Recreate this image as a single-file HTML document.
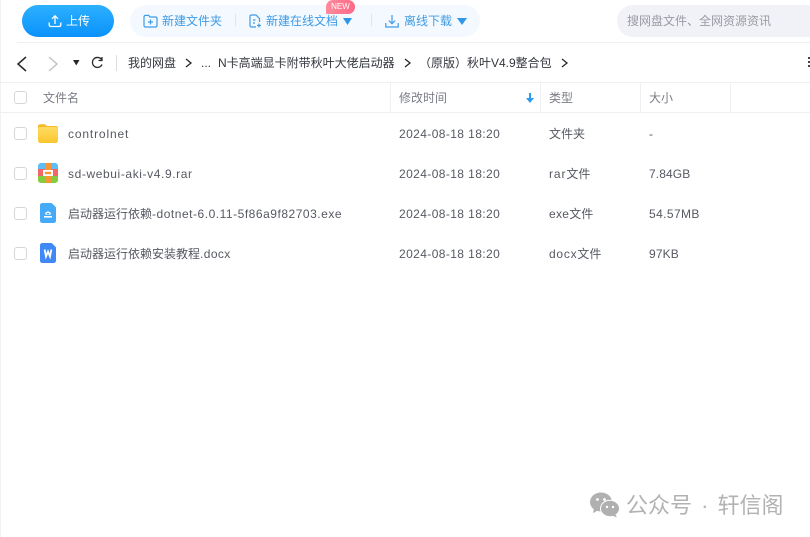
<!DOCTYPE html>
<html><head><meta charset="utf-8">
<style>
html,body{margin:0;padding:0;background:#fff}
body{width:810px;height:537px;position:relative;overflow:hidden;font-family:"Liberation Sans","Noto Sans CJK SC",sans-serif;font-size:12px;color:#565962}
.t{position:absolute;white-space:nowrap;line-height:16px}
.a{position:absolute}
svg{position:absolute;overflow:visible}
.cb{position:absolute;left:14px;width:11px;height:11px;border:1px solid #d6d7da;border-radius:3px;background:#fff}
.ln{position:absolute;background:#f0f0f2}
.b{color:#3f9be6}
.c{color:#33363d}
.s{letter-spacing:.52px}
</style></head><body>
<div class="a" style="left:0;top:0;width:1px;height:537px;background:#f1f2f4"></div>
<div class="a" style="left:22px;top:5px;width:92px;height:32px;border-radius:16px;background:linear-gradient(180deg,#2cb0ff,#0a92fb)"></div>
<svg style="left:48px;top:14px" width="14" height="14" viewBox="0 0 14 14" fill="none" stroke="#fff" stroke-width="1.3"><path d="M7 10V2M4 4.800L7 1.800l3 3M1.200 8.500v2.300c0 1 .7 1.700 1.700 1.700h8.200c1 0 1.700-.7 1.700-1.700V8.500"/></svg>
<div class="t" style="left:66px;top:13px;color:#fff;font-size:12px">上传</div>

<div class="a" style="left:130px;top:5px;width:350px;height:32px;border-radius:16px;background:#f3f9fe"></div>
<svg style="left:143px;top:14px" width="15" height="14" viewBox="0 0 15 14" fill="none" stroke="#3f9be6" stroke-width="1.2"><path d="M1 3c0-1 .6-1.600 1.600-1.600h3L7 3h5.400c1 0 1.600.6 1.600 1.600v6.800c0 1-.6 1.600-1.600 1.600H2.600C1.600 13 1 12.400 1 11.400zM7.500 5.500v5M5 8h5"/></svg>
<div class="t b" style="left:162px;top:13px">新建文件夹</div>
<div class="a" style="left:235px;top:14px;width:1px;height:12px;background:#d6e8f6"></div>
<svg style="left:249px;top:14px" width="14" height="14" viewBox="0 0 14 14" fill="none" stroke="#3f9be6" stroke-width="1.2"><path d="M7 13H2.500C1.600 13 1 12.400 1 11.500V2.500C1 1.600 1.600 1 2.500 1H7l3.500 3.500V8M4 6h2.500M4 9h2M10 9.500v4M8 11.500h4"/></svg>
<div class="t b" style="left:266px;top:13px">新建在线文档</div>
<svg style="left:343px;top:18px" width="9" height="7" viewBox="0 0 9 7"><path d="M0 0h9L4.500 7z" fill="#2f96e8"/></svg>
<div class="a" style="left:326px;top:0;width:29px;height:14px;border-radius:8px 8px 8px 1px;background:linear-gradient(90deg,#ff8b9c,#ff6a86)"></div>
<div class="t" style="left:326px;top:0;width:29px;text-align:center;font-size:8px;line-height:14px;color:#fff">NEW</div>
<div class="a" style="left:371px;top:14px;width:1px;height:12px;background:#d6e8f6"></div>
<svg style="left:385px;top:14px" width="14" height="14" viewBox="0 0 14 14" fill="none" stroke="#3f9be6" stroke-width="1.2"><path d="M7 1v8.500M3.800 6.500L7 9.700l3.200-3.200M.8 9v4h12.400V9"/></svg>
<div class="t b" style="left:404px;top:13px">离线下载</div>
<svg style="left:457px;top:18px" width="10" height="7" viewBox="0 0 10 7"><path d="M0 0h10L5 7z" fill="#2f96e8"/></svg>

<div class="a" style="left:617px;top:5px;width:193px;height:32px;border-radius:16px 0 0 16px;background:#f1f2f7"></div>
<div class="t" style="left:627px;top:13px;color:#9a9ca3">搜网盘文件、全网资源资讯</div>

<div class="ln" style="left:17px;top:42px;width:793px;height:1px"></div>

<svg style="left:15px;top:56px" width="13" height="16" viewBox="0 0 13 16" fill="none" stroke="#26282e" stroke-width="1.5"><path d="M11 1L3 8l8 7"/></svg>
<svg style="left:47px;top:56px" width="13" height="16" viewBox="0 0 13 16" fill="none" stroke="#bdbec2" stroke-width="1.3"><path d="M2 1l8 7-8 7"/></svg>
<svg style="left:73px;top:60px" width="7" height="6" viewBox="0 0 7 6"><path d="M0 0h6.500L3.250 5.500z" fill="#26282e"/></svg>
<svg style="left:90px;top:56px" width="14" height="14" viewBox="0 0 14 14" fill="none" stroke="#26282e" stroke-width="1.3"><path d="M11.500 3.500A5 5 0 1 0 12 8.500M12 1v3.500H8.500"/></svg>
<div class="a" style="left:116px;top:55px;width:1px;height:16px;background:#dcdde0"></div>
<div class="t c" style="left:128px;top:55px">我的网盘</div>
<svg style="left:185px;top:58px" width="7" height="10" viewBox="0 0 7 10" fill="none" stroke="#26282e" stroke-width="1.3"><path d="M1 1l5 4-5 4"/></svg>
<div class="t c" style="left:201px;top:55px">...</div>
<div class="t c" style="left:218px;top:55px">N卡高端显卡附带秋叶大佬启动器</div>
<svg style="left:404px;top:58px" width="7" height="10" viewBox="0 0 7 10" fill="none" stroke="#26282e" stroke-width="1.3"><path d="M1 1l5 4-5 4"/></svg>
<div class="t c" style="left:419px;top:55px">（原版）秋叶V4.9整合包</div>
<svg style="left:561px;top:58px" width="7" height="10" viewBox="0 0 7 10" fill="none" stroke="#26282e" stroke-width="1.3"><path d="M1 1l5 4-5 4"/></svg>
<div class="a" style="left:808px;top:57px;width:2px;height:2px;background:#444"></div>
<div class="a" style="left:808px;top:61px;width:2px;height:2px;background:#444"></div>
<div class="a" style="left:808px;top:65px;width:2px;height:2px;background:#444"></div>

<div class="ln" style="left:0;top:82px;width:810px;height:1px"></div>
<div class="ln" style="left:0;top:112px;width:810px;height:1px"></div>
<div class="ln" style="left:390px;top:83px;width:1px;height:29px"></div>
<div class="ln" style="left:540px;top:83px;width:1px;height:29px"></div>
<div class="ln" style="left:640px;top:83px;width:1px;height:29px"></div>
<div class="ln" style="left:730px;top:83px;width:1px;height:29px"></div>

<div class="cb" style="top:91px"></div>
<div class="t" style="left:43px;top:90px;color:#7b7d85">文件名</div>
<div class="t" style="left:399px;top:90px;color:#7b7d85">修改时间</div>
<svg style="left:526px;top:93px" width="8" height="10" viewBox="0 0 8 10"><path d="M3 0h2v5h3L4 10 0 5h3z" fill="#2b9df0"/></svg>
<div class="t" style="left:549px;top:90px;color:#7b7d85">类型</div>
<div class="t" style="left:649px;top:90px;color:#7b7d85">大小</div>

<!-- row 1 -->
<div class="cb" style="top:127px"></div>
<svg style="left:38px;top:124px" width="20" height="19" viewBox="0 0 20 19"><path d="M0 2.500C0 1 .8.200 2.200.200h4.600L9 2h8.800C19.200 2 20 2.800 20 4.200V6H0z" fill="#f7b82c"/><rect y="3" width="20" height="16" rx="2.200" fill="url(#fg)"/><defs><linearGradient id="fg" x1="0" y1="0" x2="0" y2="1"><stop offset="0" stop-color="#ffdc62"/><stop offset="1" stop-color="#fcc62f"/></linearGradient></defs></svg>
<div class="t" style="left:68px;top:126px;letter-spacing:.85px">controlnet</div>
<div class="t" style="left:399px;top:126px;letter-spacing:.4px">2024-08-18 18:20</div>
<div class="t" style="left:549px;top:126px">文件夹</div>
<div class="t" style="left:649px;top:126px">-</div>

<!-- row 2 -->
<div class="cb" style="top:167px"></div>
<svg style="left:38px;top:163px" width="20" height="20" viewBox="0 0 20 20"><defs><clipPath id="rc"><rect width="20" height="20" rx="3"/></clipPath></defs><g clip-path="url(#rc)"><rect width="20" height="7" fill="#5dbdf5"/><rect y="6" width="20" height="8" fill="#f2686a"/><rect y="13" width="20" height="7" fill="#84cc3e"/><rect x="7" width="6" height="20" fill="#f79733"/><rect x="5" y="7" width="10" height="6" fill="#fff"/><rect x="6.800" y="8.800" width="6.400" height="2.400" fill="#f79733"/></g></svg>
<div class="t" style="left:68px;top:166px;letter-spacing:.6px">sd-webui-aki-v4.9.rar</div>
<div class="t" style="left:399px;top:166px;letter-spacing:.4px">2024-08-18 18:20</div>
<div class="t" style="left:549px;top:166px"><span style="letter-spacing:.9px">rar</span>文件</div>
<div class="t" style="left:649px;top:166px;letter-spacing:.1px">7.84GB</div>

<!-- row 3 -->
<div class="cb" style="top:207px"></div>
<svg style="left:40px;top:203px" width="16" height="20" viewBox="0 0 16 20"><path d="M2.500 0h8.500c.5 0 .9.200 1.200.5l3.300 3.300c.3.300.5.700.5 1.200v12.500c0 1.500-1 2.500-2.500 2.500h-11C1 20 0 19 0 17.500v-15C0 1 1 0 2.500 0z" fill="#45aaf8"/><path d="M5 11.500C5 7.500 11 7.500 11 11.500z" fill="#fff"/><path d="M6.500 11h3C9.300 9.500 6.700 9.500 6.500 11z" fill="#45aaf8"/><rect x="4" y="13" width="8" height="1.600" fill="#fff"/></svg>
<div class="t" style="left:68px;top:206px">启动器运行依赖<span class="s">-dotnet-6.0.11-5f86a9f82703.exe</span></div>
<div class="t" style="left:399px;top:206px;letter-spacing:.4px">2024-08-18 18:20</div>
<div class="t" style="left:549px;top:206px"><span style="letter-spacing:.3px">exe</span>文件</div>
<div class="t" style="left:649px;top:206px;letter-spacing:.4px">54.57MB</div>

<!-- row 4 -->
<div class="cb" style="top:247px"></div>
<svg style="left:40px;top:243px" width="16" height="20" viewBox="0 0 16 20"><path d="M2.500 0h8.500c.5 0 .9.200 1.200.5l3.300 3.300c.3.300.5.700.5 1.200v12.500c0 1.500-1 2.500-2.500 2.500h-11C1 20 0 19 0 17.500v-15C0 1 1 0 2.500 0z" fill="#3f88f5"/><path d="M4.600 6.500L6 13.500 8 8.500l2 5 1.400-7" fill="none" stroke="#fff" stroke-width="1.800"/></svg>
<div class="t" style="left:68px;top:246px">启动器运行依赖安装教程<span style="letter-spacing:.4px">.docx</span></div>
<div class="t" style="left:399px;top:246px;letter-spacing:.4px">2024-08-18 18:20</div>
<div class="t" style="left:549px;top:246px"><span style="letter-spacing:.75px">docx</span>文件</div>
<div class="t" style="left:649px;top:246px;letter-spacing:.15px">97KB</div>

<!-- watermark -->
<svg style="left:590px;top:492px" width="30" height="26" viewBox="0 0 30 26"><ellipse cx="11" cy="10" rx="11" ry="9.500" fill="#b0b0b0"/><path d="M4 16l-1 5 6-3z" fill="#b0b0b0"/><ellipse cx="20" cy="16.500" rx="9.500" ry="8.200" fill="#b0b0b0" stroke="#fff" stroke-width="1"/><path d="M25 22l2 3.500-5-2z" fill="#b0b0b0"/><circle cx="7.500" cy="7.500" r="1.400" fill="#fff"/><circle cx="14.500" cy="7.500" r="1.400" fill="#fff"/><circle cx="17" cy="15" r="1.200" fill="#fff"/><circle cx="23" cy="15" r="1.200" fill="#fff"/></svg>
<div class="t" style="left:626px;top:494px;font-size:22px;line-height:24px;color:#b2b2b2;word-spacing:3px">公众号 · 轩信阁</div>
</body></html>
